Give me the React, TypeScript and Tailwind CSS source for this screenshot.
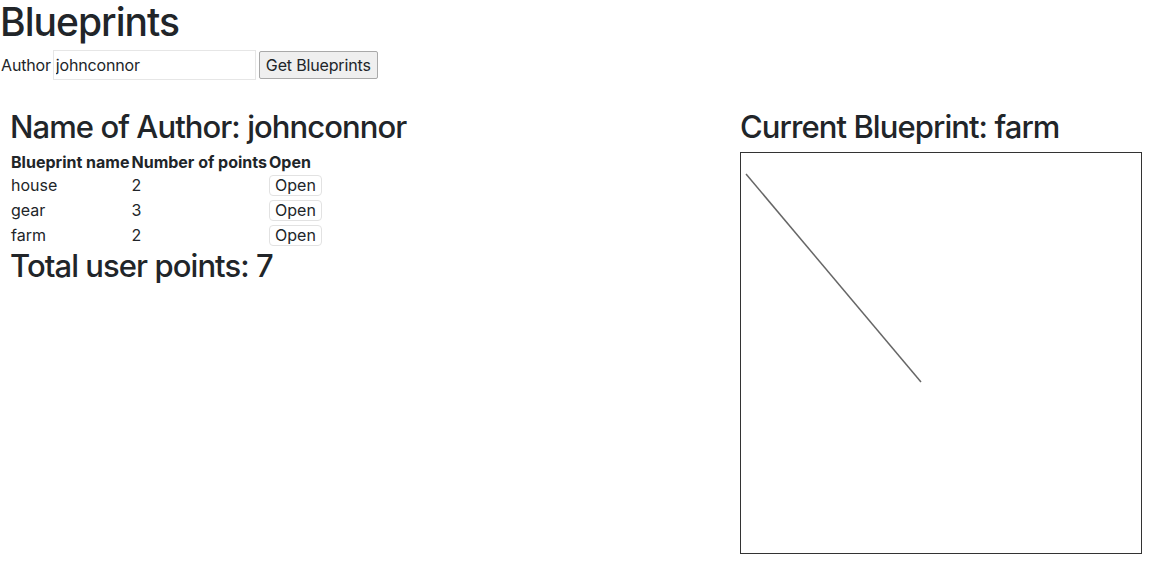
const rows = [
  { name: 'house', points: 2 },
  { name: 'gear', points: 3 },
  { name: 'farm', points: 2 },
];

export default function App() {
  return (
    <div className="min-h-screen bg-white text-[#212529] font-['Inter','Liberation_Sans',sans-serif] text-[16px] leading-[1.5]">
      <h1 className="text-[39px] font-medium leading-[1.2] tracking-[-0.025em] -mt-px">Blueprints</h1>

      {/* Author search */}
      <div className="flex items-center mt-[4px] tracking-[-0.01em]">
        <label className="pl-px pr-[2px]">Author</label>
        <input
          className="w-[203px] h-[30px] border border-[#e6e6e6] px-[2px] outline-none"
          defaultValue="johnconnor"
        />
        <button className="ml-[3px] h-[28px] px-[6px] bg-[#efefef] border border-[#a9a9a9] rounded-[2px]">
          Get Blueprints
        </button>
      </div>

      <div className="flex mt-[28px]">
        {/* Author blueprints */}
        <div className="w-[740px] pl-[10px]">
          <h2 className="text-[31px] font-medium leading-[1.2] tracking-[-0.03em]">Name of Author: johnconnor</h2>
          <table className="border-separate border-spacing-[2px] mt-[5px] -ml-[1px]">
            <thead>
              <tr>
                <th className="p-0 text-left font-bold leading-[21px]">Blueprint name</th>
                <th className="p-0 text-left font-bold leading-[21px]">Number of points</th>
                <th className="p-0 text-left font-bold leading-[21px]">Open</th>
              </tr>
            </thead>
            <tbody>
              {rows.map((r) => (
                <tr key={r.name}>
                  <td className="p-0 leading-[23px] relative -top-px">{r.name}</td>
                  <td className="p-0 leading-[23px] relative -top-px">{r.points}</td>
                  <td className="p-0 leading-[23px] relative -top-px">
                    <button className="h-[21px] mt-px px-[5px] align-top bg-white border border-[#e2e2e2] rounded-[4px] leading-none">
                      Open
                    </button>
                  </td>
                </tr>
              ))}
            </tbody>
          </table>
          <h2 className="text-[31px] font-medium leading-[1.2] tracking-[-0.03em] -mt-[3px]">Total user points: 7</h2>
        </div>

        {/* Current blueprint */}
        <div>
          <h2 className="text-[31px] font-medium leading-[1.2] tracking-[-0.03em]">Current Blueprint: farm</h2>
          <div className="mt-[7px] w-[402px] h-[402px] border border-[#333]">
            <svg width="400" height="400" viewBox="0 0 400 400">
              <line x1="5" y1="21" x2="180" y2="229" stroke="#666" strokeWidth="1.5" />
            </svg>
          </div>
        </div>
      </div>
    </div>
  );
}
